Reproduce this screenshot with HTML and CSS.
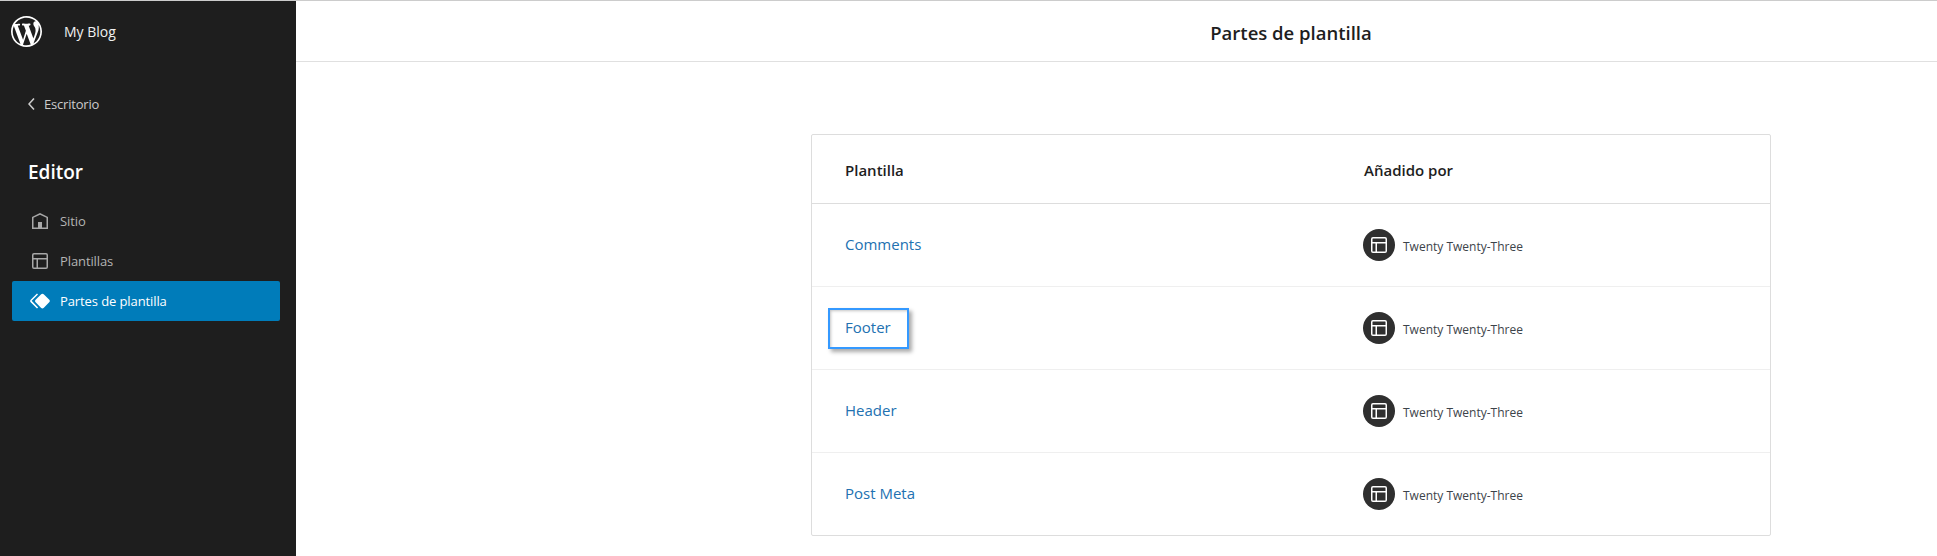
FILE: index.html
```html
<!DOCTYPE html>
<html lang="es">
<head>
<meta charset="utf-8">
<title>Partes de plantilla</title>
<link rel="stylesheet" href="styles.css">
</head>
<body>
<div class="app">
  <aside class="sidebar">
    <div class="brand">
      <svg class="logo" viewBox="0 0 20 20" aria-hidden="true"><path d="M20 10c0-5.51-4.49-10-10-10C4.48 0 0 4.49 0 10c0 5.52 4.48 10 10 10 5.51 0 10-4.48 10-10zM7.78 15.37L4.37 6.22c.55-.02 1.17-.08 1.17-.08.5-.06.44-1.13-.06-1.11 0 0-1.45.11-2.37.11-.18 0-.37 0-.58-.01C4.12 2.69 6.87 1.11 10 1.11c2.33 0 4.45.87 6.05 2.34-.68-.11-1.65.39-1.65 1.58 0 .74.45 1.36.9 2.1.35.61.55 1.36.55 2.46 0 1.49-1.4 5-1.4 5l-3.03-8.37c.54-.02.82-.17.82-.17.5-.05.44-1.25-.06-1.22 0 0-1.44.12-2.38.12-.87 0-2.33-.12-2.33-.12-.5-.03-.56 1.2-.06 1.22l.92.08 1.26 3.41zM17.41 10c.24-.64.74-1.87.43-4.25.7 1.29 1.05 2.71 1.05 4.25 0 3.29-1.73 6.24-4.4 7.78.97-2.59 1.94-5.2 2.92-7.78zM6.1 18.09C3.12 16.65 1.11 13.53 1.11 10c0-1.3.23-2.48.72-3.59C3.25 10.3 4.67 14.2 6.1 18.09zm4.03-6.63l2.58 6.98c-.86.29-1.76.45-2.71.45-.79 0-1.57-.11-2.29-.33.81-2.38 1.62-4.74 2.42-7.1z"/></svg>
      <span class="site">My Blog</span>
    </div>
    <a class="back" href="#">
      <svg class="chev" viewBox="0 0 24 24" aria-hidden="true"><path d="M14.6 7l-1.2-1L8 12l5.4 6 1.2-1-4.6-5z"/></svg>
      <span>Escritorio</span>
    </a>
    <h2 class="section">Editor</h2>
    <nav class="nav">
      <a class="item" href="#">
        <svg class="ico" viewBox="0 0 24 24" aria-hidden="true"><path d="M12 4L4 7.9V20h16V7.9L12 4zm6.5 14.5H14V13h-4v5.5H5.5V8.8L12 5.7l6.5 3.1v9.7z"/></svg>
        <span>Sitio</span>
      </a>
      <a class="item" href="#">
        <svg class="ico" viewBox="0 0 24 24" aria-hidden="true"><path d="M18 5.5H6a.5.5 0 00-.5.5v3h13V6a.5.5 0 00-.5-.5zm.5 5H10v8h8a.5.5 0 00.5-.5v-7.5zm-10 0h-3V18a.5.5 0 00.5.5h2.5v-8zM6 4h12a2 2 0 012 2v12a2 2 0 01-2 2H6a2 2 0 01-2-2V6a2 2 0 012-2z"/></svg>
        <span>Plantillas</span>
      </a>
      <a class="item active" href="#">
        <svg class="ico" viewBox="0 0 24 24" aria-hidden="true"><path d="M21.3 10.8l-5.6-5.6c-.7-.7-1.8-.7-2.5 0l-5.6 5.6c-.7.7-.7 1.8 0 2.5l5.6 5.6c.3.3.8.5 1.2.5s.9-.2 1.2-.5l5.6-5.6c.8-.7.8-1.9.1-2.5zm-17.6 1L10 5.5l-1-1-6.3 6.3c-.7.7-.7 1.8 0 2.5L9 19.5l1.1-1.1-6.3-6.3c-.2 0-.2-.2-.1-.3z"/></svg>
        <span>Partes de plantilla</span>
      </a>
    </nav>
  </aside>
  <main class="main">
    <header class="topbar"><h1 class="title">Partes de plantilla</h1></header>
    <section class="content">
      <div class="card">
        <div class="row head">
          <div class="cell-a">Plantilla</div>
          <div class="cell-b">Añadido por</div>
        </div>
        <div class="row">
          <div class="cell-a"><a class="link" href="#">Comments</a></div>
          <div class="cell-b author"><span class="avatar"><svg viewBox="0 0 24 24" aria-hidden="true"><path d="M18 5.5H6a.5.5 0 00-.5.5v3h13V6a.5.5 0 00-.5-.5zm.5 5H10v8h8a.5.5 0 00.5-.5v-7.5zm-10 0h-3V18a.5.5 0 00.5.5h2.5v-8zM6 4h12a2 2 0 012 2v12a2 2 0 01-2 2H6a2 2 0 01-2-2V6a2 2 0 012-2z"/></svg></span><span class="theme">Twenty Twenty-Three</span></div>
        </div>
        <div class="row">
          <div class="cell-a"><a class="link focused" href="#">Footer</a></div>
          <div class="cell-b author"><span class="avatar"><svg viewBox="0 0 24 24" aria-hidden="true"><path d="M18 5.5H6a.5.5 0 00-.5.5v3h13V6a.5.5 0 00-.5-.5zm.5 5H10v8h8a.5.5 0 00.5-.5v-7.5zm-10 0h-3V18a.5.5 0 00.5.5h2.5v-8zM6 4h12a2 2 0 012 2v12a2 2 0 01-2 2H6a2 2 0 01-2-2V6a2 2 0 012-2z"/></svg></span><span class="theme">Twenty Twenty-Three</span></div>
        </div>
        <div class="row">
          <div class="cell-a"><a class="link" href="#">Header</a></div>
          <div class="cell-b author"><span class="avatar"><svg viewBox="0 0 24 24" aria-hidden="true"><path d="M18 5.5H6a.5.5 0 00-.5.5v3h13V6a.5.5 0 00-.5-.5zm.5 5H10v8h8a.5.5 0 00.5-.5v-7.5zm-10 0h-3V18a.5.5 0 00.5.5h2.5v-8zM6 4h12a2 2 0 012 2v12a2 2 0 01-2 2H6a2 2 0 01-2-2V6a2 2 0 012-2z"/></svg></span><span class="theme">Twenty Twenty-Three</span></div>
        </div>
        <div class="row">
          <div class="cell-a"><a class="link" href="#">Post Meta</a></div>
          <div class="cell-b author"><span class="avatar"><svg viewBox="0 0 24 24" aria-hidden="true"><path d="M18 5.5H6a.5.5 0 00-.5.5v3h13V6a.5.5 0 00-.5-.5zm.5 5H10v8h8a.5.5 0 00.5-.5v-7.5zm-10 0h-3V18a.5.5 0 00.5.5h2.5v-8zM6 4h12a2 2 0 012 2v12a2 2 0 01-2 2H6a2 2 0 01-2-2V6a2 2 0 012-2z"/></svg></span><span class="theme">Twenty Twenty-Three</span></div>
        </div>
      </div>
    </section>
  </main>
</div>
</body>
</html>
```

FILE: styles.css
```css
* { box-sizing: border-box; }
html, body { margin: 0; height: 100%; }
body {
  font-family: "Open Sans", "Noto Sans", "Liberation Sans", sans-serif;
  background: #fff;
  color: #1e1e1e;
  overflow: hidden;
}
a { text-decoration: none; color: inherit; }
.app {
  display: flex;
  height: 556px;
  border-top: 1px solid #ccc;
}
.sidebar {
  width: 296px;
  flex: none;
  background: #1e1e1e;
  color: #ccc;
  padding: 0 16px 0 12px;
}
.brand {
  height: 61px;
  display: flex;
  align-items: center;
  color: #f0f0f0;
  font-size: 14px;
}
.logo { width: 31px; height: 31px; margin-left: -1px; fill: #fff; }
.site { margin-left: 22px; }
.back {
  display: flex;
  align-items: center;
  margin-top: 28px;
  height: 28px;
  padding-left: 8px;
  font-size: 13px;
  letter-spacing: -0.2px;
  color: #ccc;
}
.chev { width: 24px; height: 24px; fill: #ccc; flex: none; }
.section {
  margin: 40px 0 0 16px;
  font-size: 19px;
  font-weight: 600;
  line-height: 28px;
  color: #fff;
}
.nav { display: flex; flex-direction: column; margin-top: 15px; width: 268px; }
.item {
  display: flex;
  align-items: center;
  height: 40px;
  padding-left: 16px;
  border-radius: 2px;
  font-size: 13px;
  letter-spacing: -0.1px;
  color: #b4b4b4;
}
.ico { width: 24px; height: 24px; fill: #a8a8a8; flex: none; }
.item span { margin-left: 8px; }
.item.active { background: #007cba; color: #fff; }
.item.active .ico { fill: #fff; }
.main { flex: 1; display: flex; flex-direction: column; min-width: 0; }
.topbar {
  height: 61px;
  border-bottom: 1px solid #e0e0e0;
  padding: 2px 0 0 349px;
  display: flex;
  align-items: center;
  justify-content: center;
}
.title { margin: 0; font-size: 18.5px; font-weight: 600; color: #1e1e1e; }
.content { padding: 72px 0 0 515px; }
.card {
  width: 960px;
  border: 1px solid #ddd;
  border-radius: 2px;
  background: #fff;
}
.row {
  display: grid;
  grid-template-columns: 519px 1fr;
  height: 83px;
  align-items: center;
  padding-left: 33px;
  border-top: 1px solid #efefef;
}
.row:first-child { border-top: 0; height: 69px; border-bottom: 1px solid #ddd; padding-top: 2px; }
.row:nth-child(2) { border-top: 0; height: 82px; }
.head { font-size: 15px; font-weight: 600; color: #1e1e1e; }
.link {
  display: block;
  width: fit-content;
  color: #2271b1;
  font-size: 15px;
  line-height: 21px;
  padding-bottom: 1px;
}
.focused {
  margin-left: -17px;
  padding: 7px 16px 9px 15px;
  border: 2px solid #3499ff;
  box-shadow: 3px 3px 4px #aaa, inset 2px 2px 3px -1px #c4c4c4;
}
.author {
  display: flex;
  align-items: center;
  gap: 8px;
  font-size: 12px;
  color: #3c434a;
}
.theme { padding-top: 2px; }
.avatar {
  width: 32px;
  height: 32px;
  margin-left: -1px;
  border-radius: 50%;
  background: #2f2f2f;
  display: flex;
  align-items: center;
  justify-content: center;
  flex: none;
}
.avatar svg { width: 24px; height: 24px; fill: #fff; }
```
